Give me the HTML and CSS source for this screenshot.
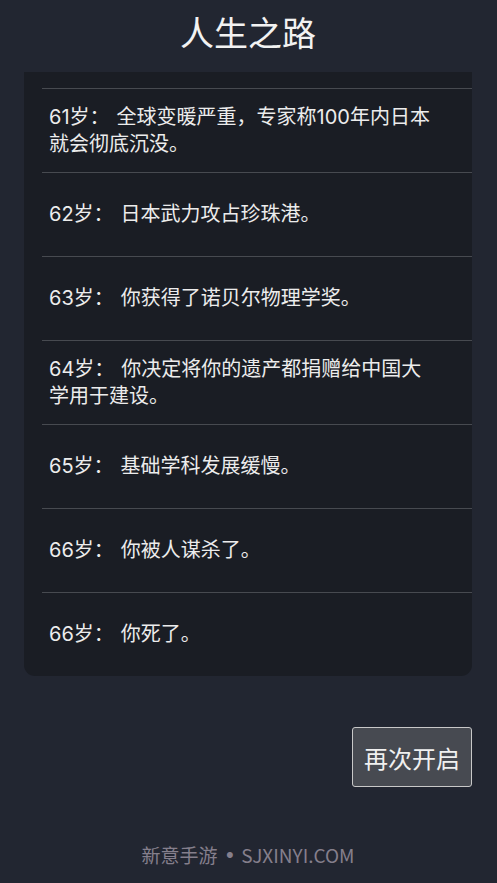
FILE: index.html
```html
<!DOCTYPE html>
<html lang="zh">
<head>
<meta charset="utf-8">
<title>人生之路</title>
<link rel="stylesheet" href="styles.css">
</head>
<body>
<div class="page">
  <h1 class="title">人生之路</h1>
  <div class="card">
    <ul class="events">
      <li class="event"><p class="text"><span class="age">61岁：</span>全球变暖严重，专家称100年内日本就会彻底沉没。</p></li>
      <li class="event"><p class="text"><span class="age">62岁：</span>日本武力攻占珍珠港。</p></li>
      <li class="event"><p class="text"><span class="age">63岁：</span>你获得了诺贝尔物理学奖。</p></li>
      <li class="event"><p class="text"><span class="age">64岁：</span>你决定将你的遗产都捐赠给中国大学用于建设。</p></li>
      <li class="event"><p class="text"><span class="age">65岁：</span>基础学科发展缓慢。</p></li>
      <li class="event"><p class="text"><span class="age">66岁：</span>你被人谋杀了。</p></li>
      <li class="event"><p class="text"><span class="age">66岁：</span>你死了。</p></li>
    </ul>
  </div>
  <div class="actions">
    <button class="restart">再次开启</button>
  </div>
  <footer class="footer">新意手游<span class="dot">•</span>SJXINYI.COM</footer>
</div>
</body>
</html>
```
FILE: styles.css
```css
* { box-sizing: border-box; }
html, body {
  margin: 0;
  padding: 0;
  background: #222631;
}
body {
  font-family: Inter, "Noto Sans CJK SC", sans-serif;
  color: #ececec;
}
.page {
  width: 497px;
  height: 883px;
  display: flex;
  flex-direction: column;
  padding: 0 25px 0 24px;
}
.title {
  margin: 0;
  height: 72px;
  display: flex;
  align-items: center;
  justify-content: center;
  font-family: "Noto Sans CJK SC", sans-serif;
  font-size: 34px;
  font-weight: 400;
  color: #f2f2f2;
  padding-bottom: 9px;
}
.card {
  background: #1a1d24;
  border-radius: 0 0 11px 11px;
  padding: 16px 0 0 18px;
}
.events {
  list-style: none;
  margin: 0;
  padding: 0;
}
.event {
  border-top: 1px solid #474a50;
  height: 84px;
  display: flex;
  align-items: center;
  padding: 0 37px 0 7px;
}
.text {
  margin: 0;
  font-size: 20px;
  line-height: 27px;
}
.age {
  margin-right: 7px;
}
.actions {
  display: flex;
  justify-content: flex-end;
  padding-top: 51px;
}
.restart {
  width: 120px;
  height: 60px;
  background: #474a51;
  border: 1px solid #c8c8c8;
  border-radius: 3px;
  color: #f0f0f0;
  font-family: "Noto Sans CJK SC", sans-serif;
  font-size: 24px;
  padding: 0;
}
.footer {
  margin-top: auto;
  height: 48px;
  display: flex;
  align-items: center;
  justify-content: center;
  font-family: "Noto Sans CJK SC", sans-serif;
  font-size: 19px;
  color: #857f8c;
  padding-bottom: 9px;
}
.dot {
  font-family: Inter, sans-serif;
  margin: 0 6px 0 7px;
}
```
